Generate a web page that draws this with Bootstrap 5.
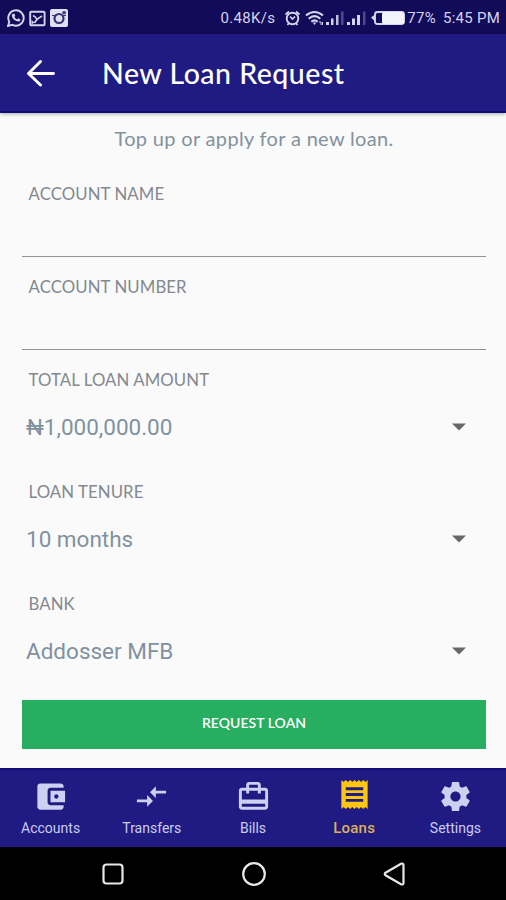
<!DOCTYPE html>
<html lang="en">
<head>
<meta charset="utf-8">
<meta name="viewport" content="width=device-width, initial-scale=1">
<title>New Loan Request</title>
<link href="https://cdn.jsdelivr.net/npm/bootstrap@5.3.0/dist/css/bootstrap.min.css" rel="stylesheet">
<style>
body{background:#fafafa;font-family:Roboto,"Liberation Sans",sans-serif;overflow:hidden}
svg{display:block;flex:none}
.screen{height:900px}
.status-strip{height:34px;background:#120b59;color:#d5d4ec;font-size:15px;line-height:34px;padding:2px 6px 0 7px}
.net-rate{letter-spacing:.3px;margin-right:9px}
.batt{letter-spacing:.3px;margin-left:2px}
.clock{letter-spacing:.25px;margin-left:7px}
.app-head{height:79px;background:#201b83;border-bottom:2px solid #120b78;color:#fff;box-shadow:0 1px 4px rgba(0,20,0,.35);padding-left:26px}
.app-title{font:500 28.500px/36px Lato,sans-serif;letter-spacing:.5px;margin-left:46px}
.form-area{padding:0 20px 0 22px}
.intro{font:400 20px/28px Lato,sans-serif;color:#82929c;height:51px;padding-top:11px;letter-spacing:.33px}
.caption{font:400 16.800px/24px Lato,sans-serif;color:#84898f;letter-spacing:.08px;padding:18px 0 0 6.500px;height:42px;margin:0}
.line-field{height:93px;border-bottom:1px solid #929494}
.pick-field{height:112px}
.pick-value{font-size:22.500px;line-height:30px;color:#8092a0;padding:0 20px 0 4px;margin-top:20px}
.btn-request{background:#27ae60;color:#fff;height:49px;border-radius:0;font:600 14px/20px Lato,sans-serif;margin-top:14px;letter-spacing:.05px}
.tab-strip{height:79px;background:#201b83;border-top:2px solid #120b78;color:#c9cbef;font-size:14px}
.tab-strip .tab-item{padding-top:9px}
.tab-strip .tab-item span{line-height:20px;margin-top:4px}
.tab-strip .tab-item.current{color:#ffc60f;padding-top:7px}
.tab-strip .tab-item.current span{color:#dfae5b;font-size:15px;font-weight:500;letter-spacing:.2px;margin-top:6px}
.sys-nav{height:53px;background:#000;padding:0 83px 0 84px}
</style>
</head>
<body>
<main class="screen d-flex flex-column">
  <div class="status-strip d-flex align-items-center justify-content-between">
    <div class="d-flex align-items-center gap-1">
      <svg width="18" height="18" viewBox="0 0 18 18"><path d="M1 17l1.300-4.200A7.700 7.700 0 1 1 5.400 15.800z" fill="none" stroke="#d5d4ec" stroke-width="1.900"/><path d="M6 4.700l1.400 0 .9 2.100-.9 1.100c.7 1.200 1.600 2 2.800 2.500l1-1.100 2.100 1c.1 1.400-.8 2.300-2 2.300C8 12.400 5 9.300 4.800 6.600 4.800 5.700 5.300 5 6 4.700z" fill="#d5d4ec"/></svg>
      <svg width="17" height="17" viewBox="0 0 17 17"><rect x="1.200" y="1.700" width="14.400" height="13.600" rx="1" fill="none" stroke="#d5d4ec" stroke-width="1.900"/><path d="M4 5.500q3 1.500 4 4M5.500 13q2-4 7.500-7" fill="none" stroke="#d5d4ec" stroke-width="1.700"/><path d="M2.500 10l3 2.500-3 2z" fill="#d5d4ec"/></svg>
      <svg width="18" height="18" viewBox="0 0 18 18"><rect width="18" height="18" rx="2" fill="#e1e0f2"/><circle cx="9" cy="9.500" r="4.500" fill="none" stroke="#38327a" stroke-width="2.200"/><path d="M2 6.500h3M13 6.500h3" stroke="#38327a" stroke-width="1"/><rect x="12.500" y="2.200" width="3.200" height="3" fill="#38327a"/></svg>
    </div>
    <div class="d-flex align-items-center">
      <span class="net-rate">0.48K/s</span>
      <svg width="17" height="16" viewBox="0 0 17 16"><circle cx="8.500" cy="8.500" r="5.800" fill="none" stroke="#d5d4ec" stroke-width="1.900"/><path d="M1.500 4.500l3.500-3M15.500 4.500L12 1.500M3.500 15l1.500-2M13.500 15l-1.500-2M6 6.500l2.500 2.500L11 6.500" fill="none" stroke="#d5d4ec" stroke-width="1.700"/></svg>
      <svg class="ms-1" width="20" height="16" viewBox="0 0 20 16"><path d="M1 5.500Q9.500-1.500 18 5.500M3.700 8.700q5.800-5 11.600 0M6.300 11.700q3.200-2.800 6.400 0" fill="none" stroke="#d5d4ec" stroke-width="2.100"/><path d="M7.700 12.600h3.600L9.500 15z" fill="#d5d4ec"/><path d="M14 12h2v3M17.500 12v3" stroke="#d5d4ec" fill="none"/></svg>
      <svg width="42" height="16" viewBox="0 0 42 16"><path d="M1 12h3v3H1zM6 8.500h2.500V15H6zM22 12h3v3h-3zM27 8.500h3V15h-3zM32 5h3v10h-3z" fill="#d5d4ec"/><path d="M11 5h2.500v10H11z" fill="#c0bedf"/><path d="M16 1.500h2.500V15H16zM38 1.500h2.500V15H38z" fill="#4f498a"/></svg>
      <svg class="ms-1" width="34" height="16" viewBox="0 0 34 16"><path d="M0 7.500l4-3v7z" fill="#d5d4ec"/><rect x="4" y="2" width="29" height="12" rx="2.500" fill="none" stroke="#d5d4ec" stroke-width="1.900"/><rect x="11" y="2" width="22" height="12" rx="2" fill="#f2f2fa"/></svg>
      <span class="batt">77%</span><span class="clock">5:45 PM</span>
    </div>
  </div>
  <header class="app-head d-flex align-items-center position-relative">
    <svg width="30" height="28" viewBox="0 0 30 28"><path d="M27.500 14.500H2.500M14.500 2.500l-12 12 12 11.500" fill="none" stroke="#fff" stroke-width="2.900" stroke-linecap="round" stroke-linejoin="round"/></svg>
    <h1 class="app-title mb-0">New Loan Request</h1>
  </header>
  <form class="form-area flex-grow-1">
    <p class="intro text-center mb-0">Top up or apply for a new loan.</p>
    <div class="line-field"><p class="caption">ACCOUNT NAME</p></div>
    <div class="line-field"><p class="caption">ACCOUNT NUMBER</p></div>
    <div class="pick-field">
      <p class="caption">TOTAL LOAN AMOUNT</p>
      <div class="pick-value d-flex align-items-center justify-content-between"><span>₦1,000,000.00</span><svg width="14" height="8" viewBox="0 0 14 8"><path d="M0 .5h14L7 7.500z" fill="#686868"/></svg></div>
    </div>
    <div class="pick-field">
      <p class="caption">LOAN TENURE</p>
      <div class="pick-value d-flex align-items-center justify-content-between"><span>10 months</span><svg width="14" height="8" viewBox="0 0 14 8"><path d="M0 .5h14L7 7.500z" fill="#686868"/></svg></div>
    </div>
    <div class="pick-field">
      <p class="caption">BANK</p>
      <div class="pick-value d-flex align-items-center justify-content-between"><span>Addosser MFB</span><svg width="14" height="8" viewBox="0 0 14 8"><path d="M0 .5h14L7 7.500z" fill="#686868"/></svg></div>
    </div>
    <button type="button" class="btn btn-request w-100 p-0 pb-1">REQUEST LOAN</button>
  </form>
  <nav class="tab-strip row g-0 text-center">
    <div class="col tab-item d-flex flex-column align-items-center"><svg width="35" height="35" viewBox="0 0 24 24" fill="#cdd0f1"><path d="M21 18v1c0 1.100-.9 2-2 2H5c-1.110 0-2-.9-2-2V5c0-1.100.89-2 2-2h14c1.100 0 2 .9 2 2v1h-9c-1.110 0-2 .9-2 2v8c0 1.100.89 2 2 2h9zm-9-2h10V8H12v8zm4-2.500c-.83 0-1.500-.67-1.500-1.500s.67-1.500 1.500-1.500 1.500.67 1.500 1.500-.67 1.500-1.500 1.500z"/></svg><span>Accounts</span></div>
    <div class="col tab-item d-flex flex-column align-items-center"><svg width="35" height="35" viewBox="0 0 24 24" fill="#cdd0f1"><path d="M9.010 14H2v2h7.010v3L13 15l-3.990-4v3zm5.980-1v-3H22V8h-7.010V5L11 9l3.990 4z"/></svg><span>Transfers</span></div>
    <div class="col tab-item d-flex flex-column align-items-center"><svg width="35" height="35" viewBox="0 0 24 24" fill="#cdd0f1"><path d="M20 6h-3V4c0-1.110-.89-2-2-2H9c-1.110 0-2 .89-2 2v2H4c-1.110 0-2 .89-2 2v11c0 1.110.89 2 2 2h16c1.110 0 2-.89 2-2V8c0-1.110-.89-2-2-2zM9 4h6v2H9V4zm11 15H4v-2h16v2zm0-5H4V8h3v2h2V8h6v2h2V8h3v6z"/></svg><span>Bills</span></div>
    <div class="col tab-item current d-flex flex-column align-items-center"><svg width="35" height="35" viewBox="0 0 24 24" fill="#ffc60f"><path d="M18 17H6v-2h12v2zm0-4H6v-2h12v2zm0-4H6V7h12v2zM3 22l1.500-1.500L6 22l1.500-1.500L9 22l1.500-1.500L12 22l1.500-1.500L15 22l1.500-1.500L18 22l1.500-1.500L21 22V2l-1.500 1.500L18 2l-1.500 1.500L15 2l-1.500 1.500L12 2l-1.500 1.500L9 2 7.500 3.500 6 2 4.500 3.500 3 2v20z"/></svg><span>Loans</span></div>
    <div class="col tab-item d-flex flex-column align-items-center"><svg width="35" height="35" viewBox="0 0 24 24" fill="#cdd0f1"><path d="M19.430 12.980c.04-.32.07-.64.07-.98s-.03-.66-.07-.98l2.110-1.650c.19-.15.24-.42.12-.64l-2-3.460c-.12-.22-.39-.3-.61-.22l-2.490 1c-.52-.4-1.080-.73-1.690-.98l-.38-2.650C14.460 2.180 14.250 2 14 2h-4c-.25 0-.46.18-.49.42l-.38 2.650c-.61.25-1.170.59-1.690.98l-2.490-1c-.23-.09-.49 0-.61.22l-2 3.460c-.13.22-.07.49.12.64l2.110 1.650c-.04.32-.07.65-.07.98s.03.66.07.98l-2.110 1.650c-.19.15-.24.42-.12.64l2 3.460c.12.22.39.3.61.22l2.490-1c.52.4 1.080.73 1.690.98l.38 2.650c.03.24.24.42.49.42h4c.25 0 .46-.18.49-.42l.38-2.650c.61-.25 1.170-.59 1.690-.98l2.490 1c.23.09.49 0 .61-.22l2-3.460c.12-.22.07-.49-.12-.64l-2.110-1.650zM12 15.500c-1.930 0-3.500-1.570-3.500-3.500s1.570-3.500 3.500-3.500 3.500 1.570 3.500 3.500-1.570 3.500-3.500 3.500z"/></svg><span>Settings</span></div>
  </nav>
  <div class="sys-nav row g-0 align-items-center flex-nowrap">
    <div class="col-auto me-auto"><svg width="58" height="26" viewBox="0 0 58 26"><rect x="19.500" y="3.500" width="19" height="19" rx="3" fill="none" stroke="#e8e8e8" stroke-width="2.200"/></svg></div>
    <div class="col-auto"><svg width="26" height="26" viewBox="0 0 26 26"><circle cx="13" cy="13" r="10.800" fill="none" stroke="#e8e8e8" stroke-width="2.200"/></svg></div>
    <div class="col-auto ms-auto"><svg width="58" height="26" viewBox="0 0 58 26"><path d="M20.500 11.700L36 2.800q2.500-1 2.500 1.500v17.400q0 2.500-2.500 1.500L20.500 14.300q-1.500-1.300 0-2.600z" fill="none" stroke="#e8e8e8" stroke-width="2.200"/></svg></div>
  </div>
</main>
<script src="https://cdn.jsdelivr.net/npm/bootstrap@5.3.0/dist/js/bootstrap.bundle.min.js"></script>
</body>
</html>
